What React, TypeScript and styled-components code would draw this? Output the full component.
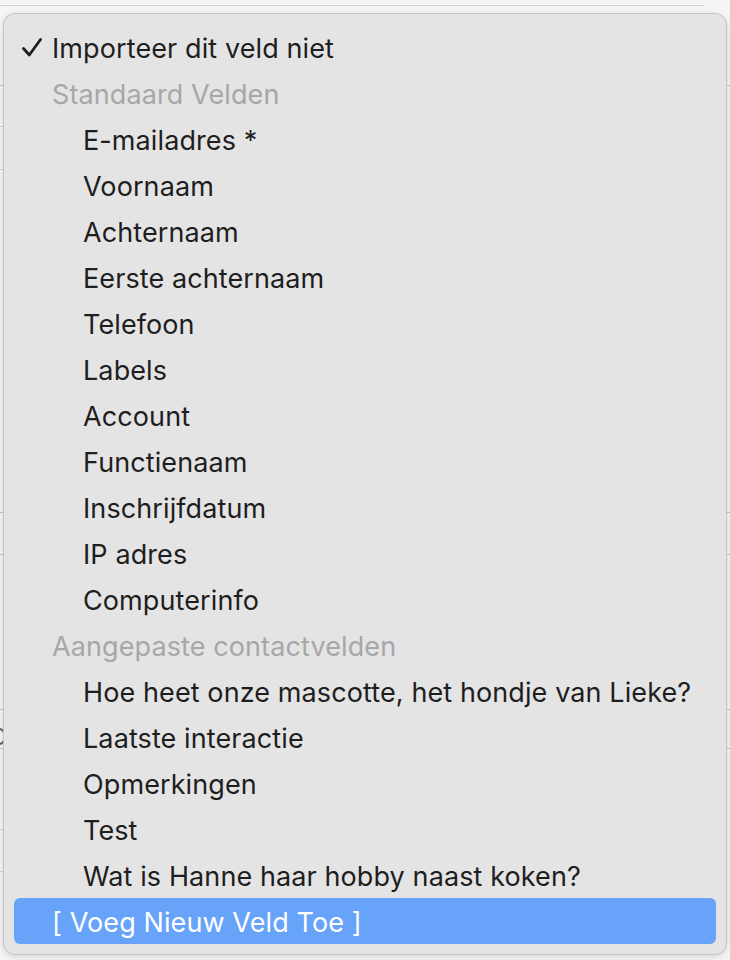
import styled, { createGlobalStyle } from 'styled-components';

const GlobalStyle = createGlobalStyle`
  html, body {
    margin: 0;
    padding: 0;
    background: #f5f5f5;
  }
  body {
    font-family: Inter, 'Noto Sans', 'Liberation Sans', sans-serif;
  }
`;

type MenuItem = {
  label: string;
  kind: 'checked' | 'header' | 'option' | 'action';
};

const items: MenuItem[] = [
  { label: 'Importeer dit veld niet', kind: 'checked' },
  { label: 'Standaard Velden', kind: 'header' },
  { label: 'E-mailadres *', kind: 'option' },
  { label: 'Voornaam', kind: 'option' },
  { label: 'Achternaam', kind: 'option' },
  { label: 'Eerste achternaam', kind: 'option' },
  { label: 'Telefoon', kind: 'option' },
  { label: 'Labels', kind: 'option' },
  { label: 'Account', kind: 'option' },
  { label: 'Functienaam', kind: 'option' },
  { label: 'Inschrijfdatum', kind: 'option' },
  { label: 'IP adres', kind: 'option' },
  { label: 'Computerinfo', kind: 'option' },
  { label: 'Aangepaste contactvelden', kind: 'header' },
  { label: 'Hoe heet onze mascotte, het hondje van Lieke?', kind: 'option' },
  { label: 'Laatste interactie', kind: 'option' },
  { label: 'Opmerkingen', kind: 'option' },
  { label: 'Test', kind: 'option' },
  { label: 'Wat is Hanne haar hobby naast koken?', kind: 'option' },
  { label: '[ Voeg Nieuw Veld Toe ]', kind: 'action' },
];

// rows of the table that sits behind the popup menu
const bgRows: { h: number; wide?: boolean }[] = [
  { h: 6, wide: true },
  { h: 80 },
  { h: 41, wide: true },
  { h: 43, wide: true },
  { h: 343 },
  { h: 42 },
  { h: 155 },
  { h: 39 },
  { h: 81, wide: true },
  { h: 42, wide: true },
];

const Page = styled.div`
  position: relative;
  width: 730px;
  height: 960px;
  overflow: hidden;
  background: #f5f5f5;
`;

const Backdrop = styled.div`
  display: flex;
  flex-direction: column;
`;

const BgRow = styled.div<{ h: number; wide?: boolean }>`
  height: ${({ h }) => h - 1}px;
  width: ${({ wide }) => (wide ? '704px' : '730px')};
  border-bottom: 1px solid ${({ wide }) => (wide ? '#d2d2d6' : '#c3c3cf')};
  display: flex;
  align-items: flex-start;
`;

// the right edge of a letter peeking out from behind the menu
const BgArc = styled.div`
  margin: 18px 0 0 -8px;
  width: 10px;
  height: 13px;
  border: 2px solid #5a5f78;
  border-radius: 50%;
`;

const Menu = styled.div`
  position: absolute;
  top: 13px;
  left: 3px;
  width: 724px;
  height: 942px;
  box-sizing: border-box;
  padding: 10px;
  background: #e5e4e5;
  border: 1px solid #c4c4c4;
  border-radius: 12px;
  box-shadow: 0 2px 6px rgba(0, 0, 0, 0.12);
  display: flex;
  flex-direction: column;
`;

const Row = styled.div<{ active?: boolean }>`
  height: 46px;
  flex: 0 0 46px;
  display: flex;
  align-items: center;
  padding-left: 8px;
  border-radius: 6px;
  background: ${({ active }) => (active ? '#67a3f9' : 'transparent')};
`;

const CheckSlot = styled.div`
  width: 30px;
  flex: 0 0 30px;
  display: flex;
  align-items: center;
`;

const Check = styled.svg`
  width: 20px;
  height: 19px;
`;

const Label = styled.span<{ indent: number; tone: string }>`
  padding-left: ${({ indent }) => indent}px;
  padding-top: 3px;
  font-size: 27px;
  letter-spacing: 0.1px;
  color: ${({ tone }) => tone};
  white-space: nowrap;
`;

const tones: Record<MenuItem['kind'], string> = {
  checked: '#1e1e1e',
  header: '#a7a6a8',
  option: '#1e1e1e',
  action: '#ffffff',
};

export default function App() {
  return (
    <Page>
      <GlobalStyle />
      <Backdrop>
        {bgRows.map((r, i) => (
          <BgRow key={i} h={r.h} wide={r.wide}>
            {i === 7 && <BgArc />}
          </BgRow>
        ))}
      </Backdrop>
      <Menu>
        {items.map((it) => (
          <Row key={it.label} active={it.kind === 'action'}>
            <CheckSlot>
              {it.kind === 'checked' && (
                <Check viewBox="0 0 20 19">
                  <path
                    d="M1.5 10.5 L7.3 17 L18.5 1.5"
                    fill="none"
                    stroke="#1e1e1e"
                    strokeWidth="2.8"
                    strokeLinecap="round"
                    strokeLinejoin="round"
                  />
                </Check>
              )}
            </CheckSlot>
            <Label indent={it.kind === 'option' ? 31 : 0} tone={tones[it.kind]}>
              {it.label}
            </Label>
          </Row>
        ))}
      </Menu>
    </Page>
  );
}
